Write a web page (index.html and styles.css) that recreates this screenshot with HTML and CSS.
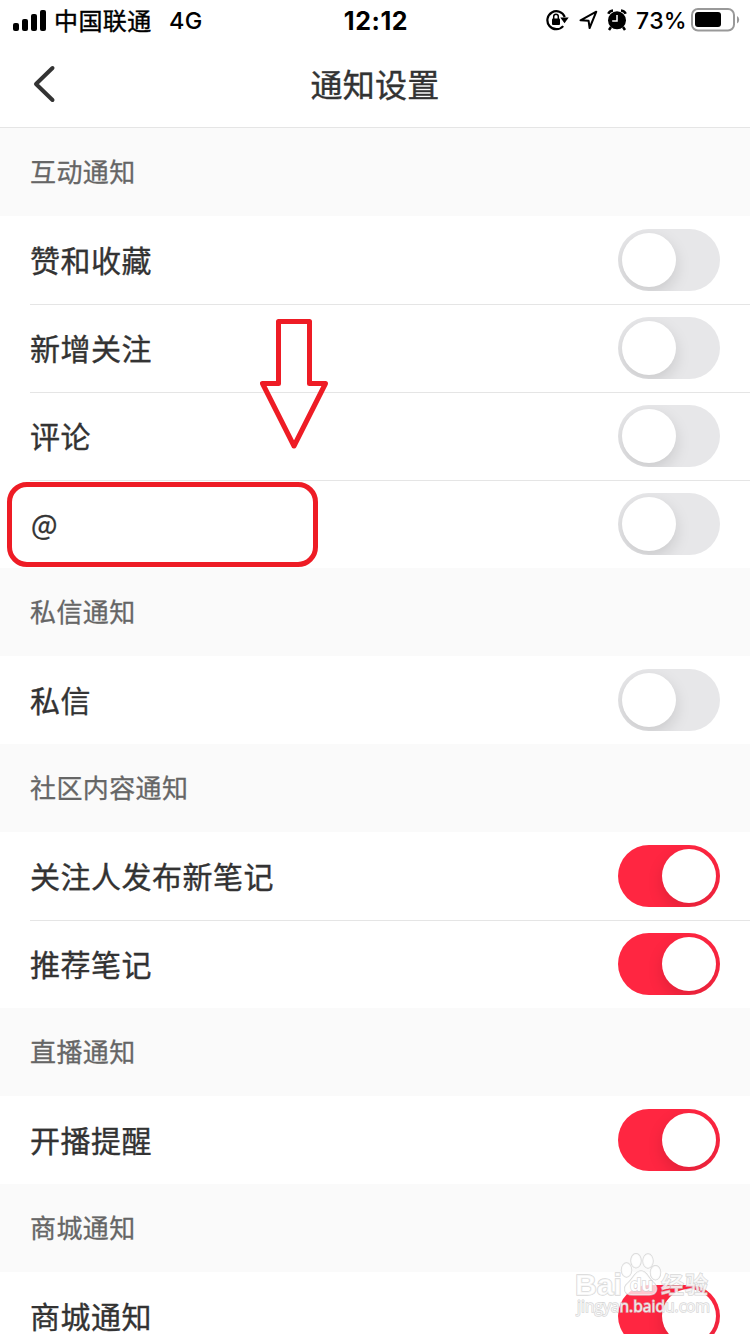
FILE: index.html
```html
<!DOCTYPE html>
<html lang="zh-CN">
<head>
<meta charset="utf-8">
<title>通知设置</title>
<link rel="stylesheet" href="styles.css">
</head>
<body>
<main class="screen">
  <header class="statusbar">
    <div class="carrier">
      <svg class="signal" viewBox="0 0 33 21" width="33" height="21"><rect x="0" y="13" width="6" height="8" rx="2"/><rect x="9" y="9" width="6" height="12" rx="2"/><rect x="18" y="4" width="6" height="17" rx="2"/><rect x="27" y="0" width="6" height="21" rx="2"/></svg>
      <span class="operator">中国联通</span>
      <span class="network">4G</span>
    </div>
    <time class="clock">12:12</time>
    <div class="indicators">
      <svg class="lock" viewBox="0 0 24 22" width="24" height="22"><path d="M17.2 17.1A9 9 0 1 1 18.8 8" fill="none" stroke="#000" stroke-width="2.2"/><path d="M14.3 8.500h8.4l-4.200 5.800z"/><rect x="6" y="9.5" width="8" height="6.5" rx="1"/><path d="M7.7 10V7.6a2.3 2.3 0 0 1 4.6 0V10" fill="none" stroke="#000" stroke-width="1.5"/></svg>
      <svg class="location" viewBox="0 0 19 20" width="19" height="20"><path d="M1.5 10.3L17.3 1.7L10.6 18L9.6 10.8Z" fill="none" stroke="#000" stroke-width="2" stroke-linejoin="round"/></svg>
      <svg class="alarm" viewBox="0 0 20 22" width="20" height="22"><circle cx="10" cy="11.3" r="9"/><path d="M1.3 4.8Q2.5 1.8 6 1.5M14 1.5Q17.500 1.8 18.7 4.8M4 18l-2 3M16 18l2 3" fill="none" stroke="#000" stroke-width="2.5"/><path d="M10 6v6H5.2" fill="none" stroke="#fff" stroke-width="1.5"/></svg>
      <span class="percent">73%</span>
      <svg class="battery" viewBox="0 0 49 24" width="49" height="24"><rect x="1" y="1" width="42" height="21.5" rx="6" fill="none" stroke="#999" stroke-width="2"/><rect x="4" y="4" width="26" height="15" rx="3"/><path d="M46 8q2.2 1 2.2 3.7T46 15.5z" fill="#999"/></svg>
    </div>
  </header>
  <nav class="navbar">
    <svg class="back" viewBox="0 0 24 40" width="24" height="40"><path d="M20.5 4L4 20L20.5 36" fill="none" stroke="#333" stroke-width="4" stroke-linecap="round" stroke-linejoin="round"/></svg>
    <h1 class="title">通知设置</h1>
  </nav>

  <h2 class="section">互动通知</h2>
  <div class="row"><span class="label">赞和收藏</span><i class="switch"></i></div>
  <div class="row"><span class="label">新增关注</span><i class="switch"></i></div>
  <div class="row"><span class="label">评论</span><i class="switch"></i></div>
  <div class="row"><span class="label mention">@</span><i class="switch"></i></div>
  <h2 class="section">私信通知</h2>
  <div class="row"><span class="label">私信</span><i class="switch"></i></div>
  <h2 class="section">社区内容通知</h2>
  <div class="row"><span class="label">关注人发布新笔记</span><i class="switch on"></i></div>
  <div class="row"><span class="label">推荐笔记</span><i class="switch on"></i></div>
  <h2 class="section">直播通知</h2>
  <div class="row"><span class="label">开播提醒</span><i class="switch on"></i></div>
  <h2 class="section">商城通知</h2>
  <div class="row"><span class="label">商城通知</span><i class="switch on"></i></div>

  <svg class="arrow" viewBox="0 0 70 132" width="70" height="132"><path d="M18.5 3.5H49.5V65.5H65.5L34 128L2.5 65.5H18.5Z" fill="none" stroke="#ee1c25" stroke-width="5" stroke-linejoin="round"/></svg>
  <div class="highlight"></div>
  <svg class="watermark" viewBox="0 0 150 74" width="150" height="74">
    <g class="mark">
      <ellipse cx="56" cy="10.7" rx="5" ry="7"/>
      <ellipse cx="68" cy="11" rx="5" ry="7"/>
      <ellipse cx="46.500" cy="20" rx="5" ry="7"/>
      <ellipse cx="75.500" cy="22.7" rx="5" ry="7"/>
      <path d="M61 21c6 0 7 7 12 11s6 13-4 13H53c-10 0-10-8-5-12s7-12 13-12z"/>
      <text class="brand" x="-5" y="45" textLength="47" lengthAdjust="spacingAndGlyphs">Bai</text>
      <text class="du" x="50" y="41">du</text>
      <text class="brand-cn" x="81" y="43" textLength="47">经验</text>
      <text class="site" x="-3" y="62" textLength="133" lengthAdjust="spacingAndGlyphs">jingyan.baidu.com</text>
    </g>
  </svg>
</main>
</body>
</html>
```
FILE: styles.css
```css
* { box-sizing: border-box; }
body { margin: 0; overflow: hidden; }
.screen {
  position: relative;
  width: 750px;
  height: 1334px;
  overflow: hidden;
  background: #fff;
  color: #333;
  font-family: "Noto Sans CJK SC", sans-serif;
}
.statusbar {
  display: grid;
  grid-template-columns: 1fr auto 1fr;
  align-items: center;
  height: 40px;
  padding: 0 10px 0 13px;
  color: #000;
}
.carrier, .indicators { display: flex; align-items: center; }
.operator { margin-left: 8px; padding-bottom: 1px; font-size: 24px; letter-spacing: .4px; line-height: 39px; -webkit-text-stroke: .4px; }
.network { margin-left: 17.5px; padding-top: 2px; font: 500 23.5px/38px Inter, sans-serif; letter-spacing: .3px; }
.clock { margin-left: -1px; padding-top: 2px; font: 700 25px/38px Inter, sans-serif; letter-spacing: .6px; }
.indicators { justify-content: flex-end; }
.location { margin-left: 9px; }
.alarm { margin-left: 9px; }
.percent { margin: 0 4px 0 9px; padding-top: 2px; font: 500 23px/38px Inter, sans-serif; letter-spacing: .3px; }
.navbar {
  display: grid;
  grid-template-columns: 90px 1fr 90px;
  align-items: center;
  height: 88px;
  border-bottom: 1px solid #e5e5e5;
}
.back { margin-left: 32px; }
.title { margin: 0; padding-bottom: 1px; text-align: center; font-size: 32px; font-weight: 400; letter-spacing: .3px; -webkit-text-stroke: .4px; }
.section {
  height: 88px;
  margin: 0;
  padding-left: 30px;
  background: #fafafa;
  color: #666;
  font-size: 26px;
  font-weight: 400;
  line-height: 86px;
  letter-spacing: .4px;
  -webkit-text-stroke: .3px;
}
.row {
  display: flex;
  align-items: center;
  justify-content: space-between;
  height: 88px;
  margin-left: 30px;
  padding-right: 30px;
  font-size: 30px;
  letter-spacing: .5px;
  -webkit-text-stroke: .35px;
}
.row + .row { box-shadow: inset 0 1px #e5e5e5; }
.label { padding-bottom: 2px; line-height: 84px; }
.mention { padding-left: 1px; font-size: 28px; }
.switch {
  width: 102px;
  height: 62px;
  padding: 4px;
  border-radius: 31px;
  background: #e7e7e9;
  overflow: hidden;
}
.switch::before {
  display: block;
  width: 54px;
  height: 54px;
  border-radius: 50%;
  background: #fff;
  box-shadow: 0 6px 16px rgba(0, 0, 0, .13);
  content: "";
}
.switch.on { background: #ff2641; }
.switch.on::before { margin-left: auto; }
.arrow { position: absolute; left: 260px; top: 318px; }
.highlight {
  position: absolute;
  left: 7px;
  top: 482px;
  width: 311px;
  height: 85px;
  border: 5px solid #ee1c25;
  border-radius: 20px;
}
.watermark { position: absolute; left: 580px; top: 1250px; overflow: visible; }
.mark { fill: rgba(255, 255, 255, .75); stroke: rgba(205, 205, 205, .8); stroke-width: 1.4; paint-order: stroke; }
.brand, .du { font-family: "Liberation Sans", sans-serif; font-weight: 700; font-size: 30px; }
.du { font-size: 19px; fill: #fff; }
.brand-cn { font-family: "Noto Sans CJK SC", sans-serif; font-weight: 500; font-size: 23px; }
.site { font-family: "Open Sans", sans-serif; font-size: 16px; }
```
